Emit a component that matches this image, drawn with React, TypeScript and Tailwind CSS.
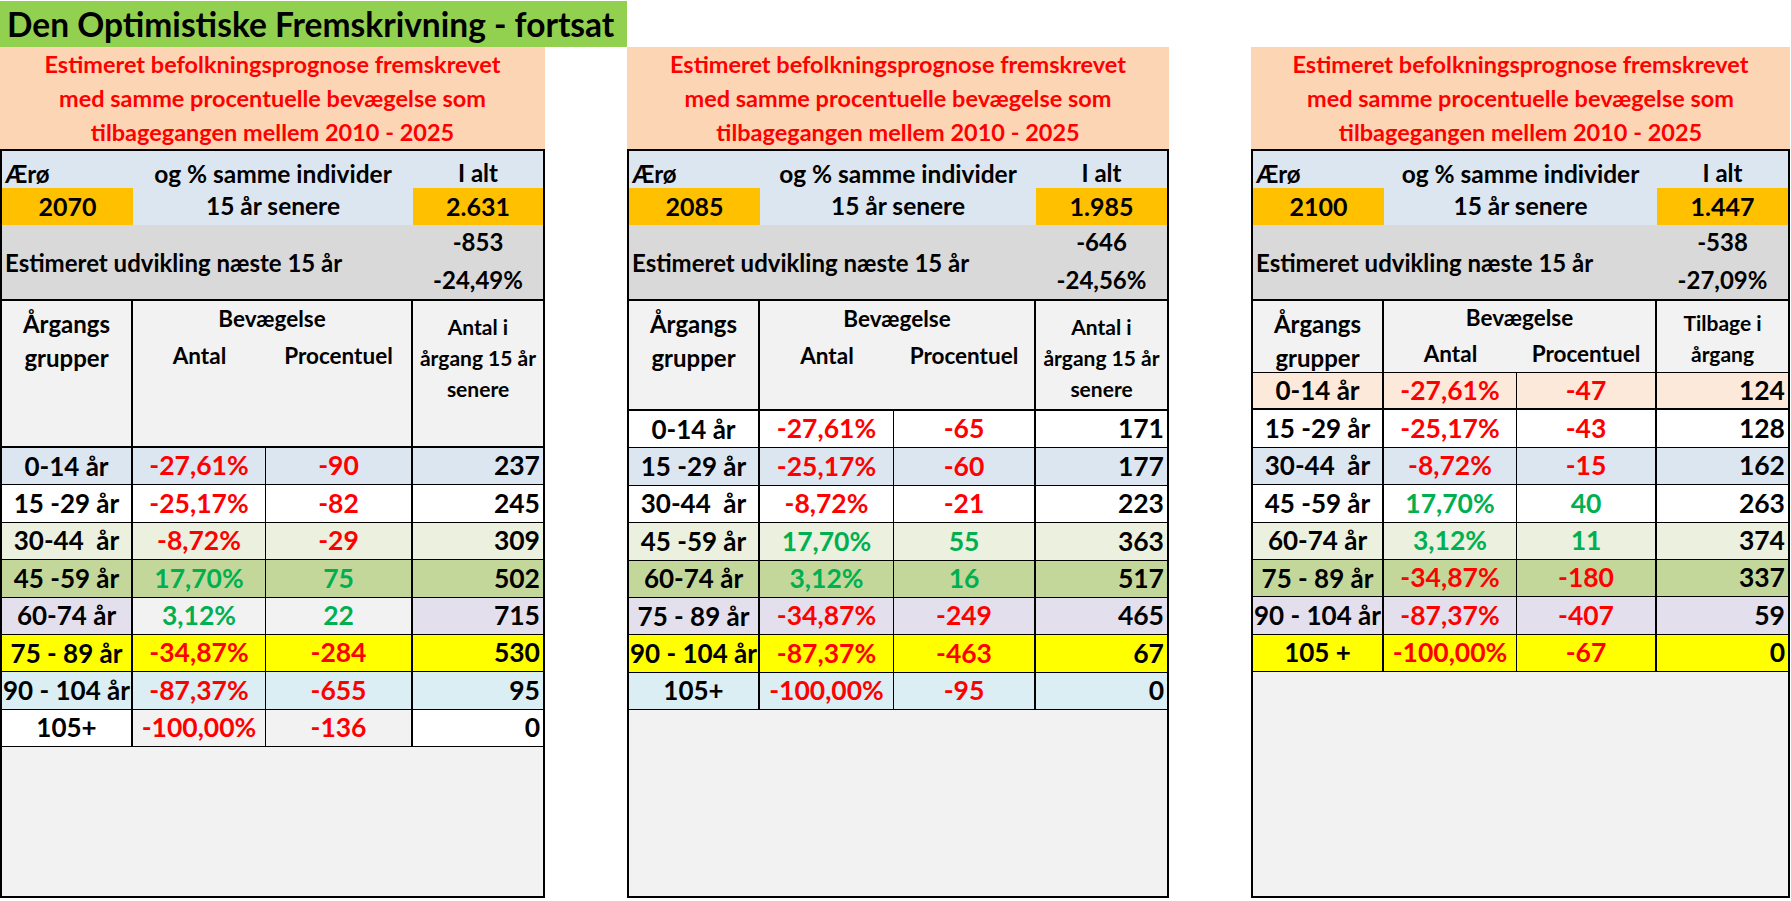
import React from 'react';

type Row = {
  group: string;
  pct: string;
  antal: string;
  total: string;
  bg: string;
  midBg?: string;
  thick?: boolean;
};

type Panel = {
  year: string;
  total: string;
  diff: string;
  diffPct: string;
  width: string;
  c1: string;
  c2: string;
  c4: string;
  headH: string;
  headBorder: string;
  lastHead: string[];
  lastHeadPad: string;
  rows: Row[];
};

const BLUE = 'bg-[#dce6f1]';
const WHITE = 'bg-white';
const LGREEN = 'bg-[#ebf1de]';
const GREEN = 'bg-[#c4d79b]';
const LAV = 'bg-[#e4dfec]';
const YELLOW = 'bg-[#ffff00]';
const CYAN = 'bg-[#daeef3]';
const PEACH = 'bg-[#fde9d9]';
const GREY = 'bg-[#f2f2f2]';

const panels: Panel[] = [
  {
    year: '2070',
    total: '2.631',
    diff: '-853',
    diffPct: '-24,49%',
    width: 'w-[545px]',
    c1: 'w-[131px]',
    c2: 'w-[133px]',
    c4: 'w-[130px]',
    headH: 'h-[147px]',
    headBorder: 'border-b-2',
    lastHead: ['Antal i', 'årgang 15 år', 'senere'],
    lastHeadPad: 'pt-[10px]',
    rows: [
      { group: '0-14 år', pct: '-27,61%', antal: '-90', total: '237', bg: BLUE },
      { group: '15 -29 år', pct: '-25,17%', antal: '-82', total: '245', bg: WHITE },
      { group: '30-44  år', pct: '-8,72%', antal: '-29', total: '309', bg: LGREEN },
      { group: '45 -59 år', pct: '17,70%', antal: '75', total: '502', bg: GREEN },
      { group: '60-74 år', pct: '3,12%', antal: '22', total: '715', bg: LAV, midBg: GREY },
      { group: '75 - 89 år', pct: '-34,87%', antal: '-284', total: '530', bg: YELLOW },
      { group: '90 - 104 år', pct: '-87,37%', antal: '-655', total: '95', bg: CYAN },
      { group: '105+', pct: '-100,00%', antal: '-136', total: '0', bg: WHITE, midBg: GREY },
    ],
  },
  {
    year: '2085',
    total: '1.985',
    diff: '-646',
    diffPct: '-24,56%',
    width: 'w-[542px]',
    c1: 'w-[131px]',
    c2: 'w-[134px]',
    c4: 'w-[131px]',
    headH: 'h-[110px]',
    headBorder: 'border-b-2',
    lastHead: ['Antal i', 'årgang 15 år', 'senere'],
    lastHeadPad: 'pt-[10px]',
    rows: [
      { group: '0-14 år', pct: '-27,61%', antal: '-65', total: '171', bg: WHITE },
      { group: '15 -29 år', pct: '-25,17%', antal: '-60', total: '177', bg: BLUE },
      { group: '30-44  år', pct: '-8,72%', antal: '-21', total: '223', bg: WHITE },
      { group: '45 -59 år', pct: '17,70%', antal: '55', total: '363', bg: LGREEN },
      { group: '60-74 år', pct: '3,12%', antal: '16', total: '517', bg: GREEN },
      { group: '75 - 89 år', pct: '-34,87%', antal: '-249', total: '465', bg: LAV },
      { group: '90 - 104 år', pct: '-87,37%', antal: '-463', total: '67', bg: YELLOW },
      { group: '105+', pct: '-100,00%', antal: '-95', total: '0', bg: CYAN },
    ],
  },
  {
    year: '2100',
    total: '1.447',
    diff: '-538',
    diffPct: '-27,09%',
    width: 'w-[539px]',
    c1: 'w-[131px]',
    c2: 'w-[133px]',
    c4: 'w-[131px]',
    headH: 'h-[72px]',
    headBorder: 'border-b',
    lastHead: ['Tilbage i', 'årgang'],
    lastHeadPad: 'pt-[6px]',
    rows: [
      { group: '0-14 år', pct: '-27,61%', antal: '-47', total: '124', bg: PEACH, thick: true },
      { group: '15 -29 år', pct: '-25,17%', antal: '-43', total: '128', bg: WHITE },
      { group: '30-44  år', pct: '-8,72%', antal: '-15', total: '162', bg: BLUE },
      { group: '45 -59 år', pct: '17,70%', antal: '40', total: '263', bg: WHITE },
      { group: '60-74 år', pct: '3,12%', antal: '11', total: '374', bg: LGREEN },
      { group: '75 - 89 år', pct: '-34,87%', antal: '-180', total: '337', bg: GREEN },
      { group: '90 - 104 år', pct: '-87,37%', antal: '-407', total: '59', bg: LAV },
      { group: '105 +', pct: '-100,00%', antal: '-67', total: '0', bg: YELLOW },
    ],
  },
];

const valueColor = (v: string) => (v.startsWith('-') ? 'text-[#ff0000]' : 'text-[#00b050]');

const DataRow: React.FC<{ row: Row; p: Panel }> = ({ row, p }) => {
  const mid = row.midBg ?? row.bg;
  return (
    <div
      className={`flex h-[37.4px] shrink-0 border-black text-[26.5px] ${row.thick ? 'border-b-2' : 'border-b'}`}
    >
      <div
        className={`${p.c1} ${row.bg} flex items-center justify-center whitespace-pre border-r-2 border-black text-[26px]`}
      >
        {row.group}
      </div>
      <div className={`${p.c2} ${mid} flex items-center justify-center border-r border-black ${valueColor(row.pct)}`}>
        {row.pct}
      </div>
      <div className={`flex-1 ${mid} flex items-center justify-center border-r-2 border-black ${valueColor(row.antal)}`}>
        {row.antal}
      </div>
      <div className={`${p.c4} ${row.bg} flex items-center justify-end pr-[3px]`}>{row.total}</div>
    </div>
  );
};

const PanelView: React.FC<{ p: Panel }> = ({ p }) => (
  <div className={`${p.width} flex flex-col`}>
    <div className="h-[102px] bg-[#fcd5b4] flex flex-col items-center justify-center text-[#ff0000] text-[23.5px] leading-[34px] text-center whitespace-nowrap">
      <div>Estimeret befolkningsprognose fremskrevet</div>
      <div>med samme procentuelle bevægelse som</div>
      <div>tilbagegangen mellem 2010 - 2025</div>
    </div>

    <div className="h-[749px] border-2 border-black flex flex-col">
      {/* Ærø / år / i alt */}
      <div className="h-[74px] flex bg-[#dce6f1] shrink-0">
        <div className={`${p.c1} flex flex-col`}>
          <div className="h-[37px] flex items-center pl-[3px] pt-[8px] text-[24px]">Ærø</div>
          <div className="h-[37px] bg-[#ffc000] flex items-center justify-center text-[25px]">{p.year}</div>
        </div>
        <div className="flex-1 flex flex-col text-[24.5px]">
          <div className="h-[37px] flex items-center justify-center pt-[10px]">og % samme individer</div>
          <div className="h-[37px] flex items-center justify-center">15 år senere</div>
        </div>
        <div className={`${p.c4} flex flex-col`}>
          <div className="h-[37px] flex items-center justify-center pt-[6px] text-[24px]">I alt</div>
          <div className="h-[37px] bg-[#ffc000] flex items-center justify-center text-[25px]">{p.total}</div>
        </div>
      </div>

      {/* udvikling */}
      <div className="h-[76px] shrink-0 flex bg-[#d9d9d9] border-b-2 border-black text-[24px]">
        <div className="flex-1 flex items-center pl-[3px] pt-[2px] whitespace-nowrap">
          Estimeret udvikling næste 15 år
        </div>
        <div className={`${p.c4} flex flex-col items-center justify-center leading-[38px] pb-[2px]`}>
          <div>{p.diff}</div>
          <div>{p.diffPct}</div>
        </div>
      </div>

      {/* column headings */}
      <div className={`${p.headH} shrink-0 flex bg-[#f2f2f2] border-black ${p.headBorder}`}>
        <div className={`${p.c1} border-r-2 border-black flex flex-col items-center pt-[6px] text-[24px] leading-[34px]`}>
          <div>Årgangs</div>
          <div>grupper</div>
        </div>
        <div className="flex-1 flex flex-col border-r-2 border-black text-[22.5px]">
          <div className="h-[36px] flex items-center justify-center">Bevægelse</div>
          <div className="h-[38px] flex">
            <div className={`${p.c2} flex items-center justify-center`}>Antal</div>
            <div className="flex-1 flex items-center justify-center">Procentuel</div>
          </div>
        </div>
        <div
          className={`${p.c4} flex flex-col items-center ${p.lastHeadPad} text-[21px] leading-[31px] whitespace-nowrap`}
        >
          {p.lastHead.map((t) => (
            <div key={t}>{t}</div>
          ))}
        </div>
      </div>

      {p.rows.map((r) => (
        <DataRow key={r.group} row={r} p={p} />
      ))}

      <div className="flex-1 bg-[#f2f2f2]" />
    </div>
  </div>
);

export default function App() {
  return (
    <div
      className="w-[1791px] h-[901px] bg-white text-black font-bold overflow-hidden"
      style={{ fontFamily: 'Lato, "Noto Sans", sans-serif' }}
    >
      <div className="w-[627px] h-[46px] mt-[1px] bg-[#92d050] flex items-center pl-[7px] text-[33.5px] whitespace-nowrap">
        Den Optimistiske Fremskrivning - fortsat
      </div>
      <div className="flex gap-[82px]">
        {panels.map((p) => (
          <PanelView key={p.year} p={p} />
        ))}
      </div>
    </div>
  );
}
